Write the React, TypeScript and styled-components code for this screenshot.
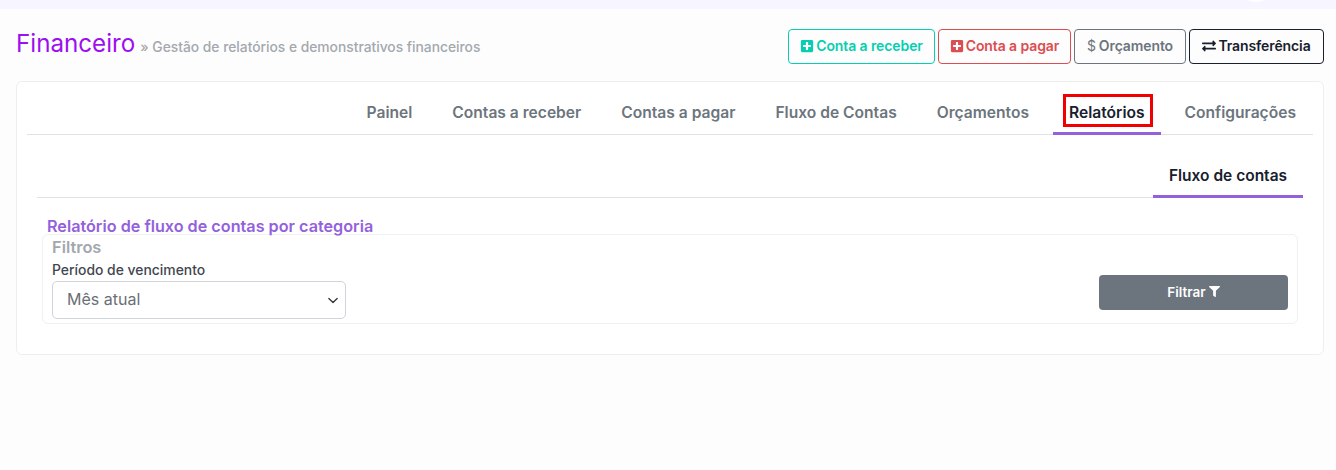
import styled, { createGlobalStyle } from "styled-components";
import { FaPlusSquare, FaExchangeAlt, FaFilter } from "react-icons/fa";

const GlobalStyle = createGlobalStyle`
  html, body {
    margin: 0;
    padding: 0;
    background: #fdfdfd;
    font-family: "Inter", "Liberation Sans", sans-serif;
  }
  * { box-sizing: border-box; }
`;

const TopBar = styled.div`
  height: 9px;
  background: #f7f5ff;
  position: relative;
  overflow: hidden;
`;

const Avatar = styled.div`
  position: absolute;
  left: 1240px;
  top: -30px;
  width: 32px;
  height: 32px;
  border-radius: 50%;
  background: #fff;
`;

const Page = styled.div`
  padding: 20px 12px 0 16px;
`;

const Header = styled.div`
  display: flex;
  justify-content: space-between;
  align-items: center;
  height: 35px;
  margin-bottom: 17px;
`;

const TitleRow = styled.div`
  display: flex;
  align-items: baseline;
  gap: 5px;
  padding-bottom: 7px;
`;

const Title = styled.h1`
  margin: 0;
  font-size: 24.2px;
  font-weight: 400;
  color: #9c0ff0;
`;

const Subtitle = styled.span`
  font-size: 13.8px;
  font-weight: 500;
  color: #a3a8ae;
`;

const Actions = styled.div`
  display: flex;
  gap: 3px;
`;

const ActionButton = styled.button<{ $color: string; $width: number }>`
  display: flex;
  align-items: center;
  justify-content: center;
  gap: 2px;
  width: ${(p) => p.$width}px;
  height: 35px;
  padding: 0 0 2px 0;
  background: transparent;
  border: 1px solid ${(p) => p.$color};
  border-radius: 4px;
  color: ${(p) => p.$color};
  font-family: inherit;
  font-size: 14px;
  font-weight: 600;
  letter-spacing: -0.1px;
`;

const Dollar = styled.span`
  font-weight: 400;
  margin-right: 1px;
`;

const Card = styled.div`
  height: 274px;
  padding: 10px;
  background: #fff;
  border: 1px solid #eeeeee;
  border-radius: 6px;
`;

const MainTabs = styled.nav`
  display: flex;
  justify-content: flex-end;
  gap: 8px;
  height: 43px;
  padding-right: 1px;
  border-bottom: 1px solid #dee2e6;
`;

const Tab = styled.a<{ $active?: boolean }>`
  position: relative;
  display: flex;
  align-items: center;
  height: 43px;
  padding: 0 16px;
  font-size: 15.6px;
  font-weight: 600;
  color: ${(p) => (p.$active ? "#17202c" : "#6c757d")};
  border-bottom: 3px solid ${(p) => (p.$active ? "#9461dd" : "transparent")};
`;

const Highlight = styled.span`
  position: absolute;
  left: 10px;
  top: 2px;
  width: 90px;
  height: 33px;
  border: 3px solid #f00000;
`;

const Body = styled.div`
  padding: 20px 10px 0 10px;
`;

const SubTabs = styled.div`
  display: flex;
  justify-content: flex-end;
  height: 43px;
  border-bottom: 1px solid #dee2e6;
`;

const SubTab = styled.a`
  display: flex;
  align-items: center;
  justify-content: center;
  width: 150px;
  height: 43px;
  font-size: 15.5px;
  font-weight: 600;
  color: #17202c;
  border-bottom: 3px solid #9461dd;
`;

const ReportTitle = styled.h2`
  margin: 19px 0 0 0;
  padding-left: 10px;
  height: 17px;
  line-height: 18px;
  font-size: 16.2px;
  font-weight: 600;
  color: #9461dd;
`;

const FilterBox = styled.div`
  margin: 0 5px 0 5px;
  height: 90px;
  padding: 3px 9px 0 9px;
  border: 1px solid #f1f1f1;
  border-radius: 6px;
`;

const FilterTitle = styled.div`
  height: 18px;
  line-height: 18px;
  font-size: 16.4px;
  font-weight: 600;
  color: #a3a8ae;
`;

const FilterRow = styled.div`
  display: flex;
  justify-content: space-between;
  align-items: flex-end;
`;

const Field = styled.div`
  display: flex;
  flex-direction: column;
  width: 294px;
  padding-top: 6px;
`;

const Label = styled.label`
  height: 18px;
  line-height: 16px;
  font-size: 13.9px;
  font-weight: 500;
  color: #3f4750;
  margin-bottom: 1px;
`;

const Select = styled.select`
  appearance: none;
  width: 294px;
  height: 38px;
  padding: 0 14px 2px 14px;
  border: 1px solid #ced4da;
  border-radius: 5px;
  background-color: #fff;
  background-image: url("data:image/svg+xml,%3csvg xmlns='http://www.w3.org/2000/svg' viewBox='0 0 16 16'%3e%3cpath fill='none' stroke='%23343a40' stroke-linecap='round' stroke-linejoin='round' stroke-width='2' d='M2 5l6 6 6-6'/%3e%3c/svg%3e");
  background-repeat: no-repeat;
  background-position: right 5px center;
  background-size: 14px 11px;
  color: #6a6f75;
  font-family: inherit;
  font-size: 16px;
`;

const FilterButton = styled.button`
  display: flex;
  align-items: center;
  justify-content: center;
  gap: 3px;
  width: 189px;
  height: 35px;
  margin-bottom: 9px;
  padding: 0 0 2px 0;
  background: #6c757d;
  border: none;
  border-radius: 4px;
  color: #fff;
  font-family: inherit;
  font-size: 13.5px;
  font-weight: 600;
`;

const plusSize = 14;

export default function App() {
  return (
    <>
      <GlobalStyle />
      <TopBar>
        <Avatar />
      </TopBar>
      <Page>
        <Header>
          <TitleRow>
            <Title>Financeiro</Title>
            <Subtitle>» Gestão de relatórios e demonstrativos financeiros</Subtitle>
          </TitleRow>
          <Actions>
            <ActionButton $color="#06cfb1" $width={147}>
              <FaPlusSquare size={plusSize} />
              Conta a receber
            </ActionButton>
            <ActionButton $color="#dc4d52" $width={133}>
              <FaPlusSquare size={plusSize} />
              Conta a pagar
            </ActionButton>
            <ActionButton $color="#6c757d" $width={112}>
              <Dollar>$</Dollar>
              Orçamento
            </ActionButton>
            <ActionButton $color="#17202c" $width={135}>
              <FaExchangeAlt size={14} />
              Transferência
            </ActionButton>
          </Actions>
        </Header>
        <Card>
          <MainTabs>
            <Tab>Painel</Tab>
            <Tab>Contas a receber</Tab>
            <Tab>Contas a pagar</Tab>
            <Tab>Fluxo de Contas</Tab>
            <Tab>Orçamentos</Tab>
            <Tab $active>
              Relatórios
              <Highlight />
            </Tab>
            <Tab>Configurações</Tab>
          </MainTabs>
          <Body>
            <SubTabs>
              <SubTab>Fluxo de contas</SubTab>
            </SubTabs>
            <ReportTitle>Relatório de fluxo de contas por categoria</ReportTitle>
            <FilterBox>
              <FilterTitle>Filtros</FilterTitle>
              <FilterRow>
                <Field>
                  <Label>Período de vencimento</Label>
                  <Select defaultValue="atual">
                    <option value="atual">Mês atual</option>
                  </Select>
                </Field>
                <FilterButton>
                  Filtrar <FaFilter size={11} />
                </FilterButton>
              </FilterRow>
            </FilterBox>
          </Body>
        </Card>
      </Page>
    </>
  );
}
